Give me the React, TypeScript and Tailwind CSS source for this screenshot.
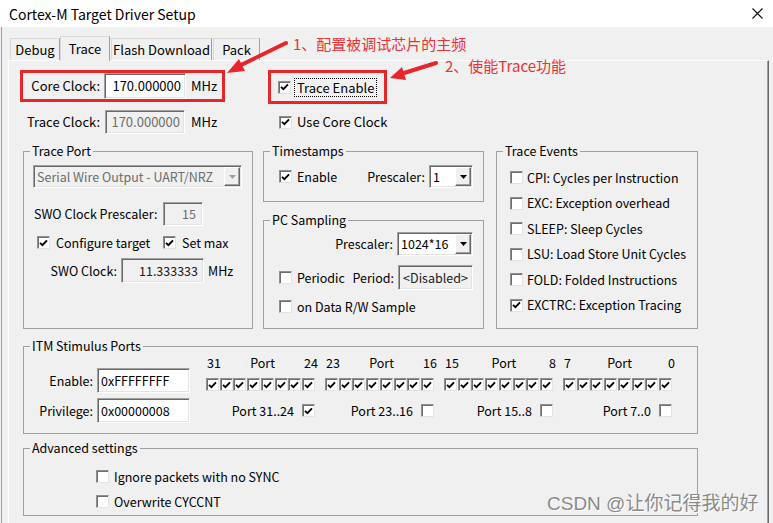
import React from "react";

// classic win32 sunken edge, used for edit boxes and combo boxes
const sunken =
  "border border-t-[#a0a0a0] border-l-[#a0a0a0] border-b-white border-r-white shadow-[inset_1px_1px_0_#696969,inset_-1px_-1px_0_#e3e3e3]";

function Check({ on = false }: { on?: boolean }) {
  return (
    <span className="flex h-[13px] w-[13px] shrink-0 items-center justify-center border border-[#8f8f8f] border-b-[#e3e3e3] border-r-[#e3e3e3] bg-white shadow-[inset_1px_1px_0_#6e6e6e]">
      {on && (
        <svg width="9" height="8" viewBox="0 0 9 8">
          <path d="M1 3.8 L3.4 6.2 L8 1.4" stroke="#000" strokeWidth="1.9" fill="none" />
        </svg>
      )}
    </span>
  );
}

type FieldProps = {
  children: React.ReactNode;
  className?: string;
  disabled?: boolean;
};

function Field({ children, className = "", disabled }: FieldProps) {
  return (
    <div
      className={`flex shrink-0 items-center whitespace-nowrap ${sunken} ${
        disabled ? "bg-[#f0f0f0]" : "bg-white"
      } ${className}`}
    >
      {children}
    </div>
  );
}

function Combo({ value, className = "", disabled }: { value: string; className?: string; disabled?: boolean }) {
  return (
    <div
      className={`flex shrink-0 items-stretch ${sunken} ${
        disabled ? "bg-[#f0f0f0] text-[#6d6d6d]" : "bg-white"
      } ${className}`}
    >
      <span className="flex flex-1 items-center overflow-hidden whitespace-nowrap pl-[3px]">{value}</span>
      <span className="m-[1px] flex w-[16px] items-center justify-center border border-t-white border-l-white border-b-[#696969] border-r-[#696969] bg-[#f0f0f0] shadow-[inset_-1px_-1px_0_#a0a0a0]">
        <svg width="7" height="4" viewBox="0 0 7 4">
          <path d="M0 0h7L3.5 4z" fill={disabled ? "#a0a0a0" : "#000"} />
        </svg>
      </span>
    </div>
  );
}

function Group({ title, className = "", children }: { title: string; className?: string; children?: React.ReactNode }) {
  return (
    <fieldset className={`shrink-0 border border-[#a0a0a0] ${className}`}>
      <legend className="ml-[6px] px-[2px] leading-[16px]">{title}</legend>
      {children}
    </fieldset>
  );
}

function Tab({ label, active, className = "" }: { label: string; active?: boolean; className?: string }) {
  return (
    <div
      className={`flex items-center justify-center whitespace-nowrap border border-b-0 border-[#d9d9d9] border-r-[#a0a0a0] bg-[#f0f0f0] ${
        active ? "relative z-10 -mb-[1px] h-[25px]" : "h-[22px]"
      } ${className}`}
    >
      {label}
    </div>
  );
}

const events = [
  { label: "CPI: Cycles per Instruction", on: false },
  { label: "EXC: Exception overhead", on: false },
  { label: "SLEEP: Sleep Cycles", on: false },
  { label: "LSU: Load Store Unit Cycles", on: false },
  { label: "FOLD: Folded Instructions", on: false },
  { label: "EXCTRC: Exception Tracing", on: true },
];

const portGroups = [
  { hi: "31", lo: "24", name: "Port 31..24", priv: true },
  { hi: "23", lo: "16", name: "Port 23..16", priv: false },
  { hi: "15", lo: "8", name: "Port 15..8", priv: false },
  { hi: "7", lo: "0", name: "Port 7..0", priv: false },
];

export default function App() {
  return (
    <div className="relative h-[523px] w-[773px] overflow-hidden bg-[#f0f0f0] font-['Noto_Sans_CJK_SC','Noto_Sans',sans-serif] text-[12.5px] leading-[16px] text-black">
      {/* title bar */}
      <div className="flex h-[27px] items-center justify-between bg-white pl-[9px] pr-[10px] text-[14px]">
        <span>Cortex-M Target Driver Setup</span>
        <svg width="11" height="11" viewBox="0 0 11 11">
          <path d="M0.5 0.5 L10.5 10.5 M10.5 0.5 L0.5 10.5" stroke="#111" strokeWidth="1.1" />
        </svg>
      </div>

      <div className="ml-[1px] flex h-[496px] flex-col border-l border-[#a0a0a0]">
        {/* tabs */}
        <div className="ml-[8px] mt-[9px] flex h-[24px] items-end text-[13px]">
          <Tab label="Debug" className="w-[50px]" />
          <Tab label="Trace" active className="w-[50px]" />
          <Tab label="Flash Download" className="ml-[1px] w-[101px]" />
          <Tab label="Pack" className="ml-[1px] w-[47px]" />
        </div>

        {/* tab page */}
        <div className="ml-[6px] w-[761px] flex-1 border-l border-t border-r border-l-white border-t-white border-r-[#696969] shadow-[inset_-1px_0_0_#a0a0a0]">
          {/* core clock / trace enable */}
          <div className="ml-[11px] mt-[9px] flex items-start text-[13px]">
            <div className="flex h-[32px] w-[205px] items-center border-[3px] border-[#e5262b]">
              <span className="w-[77px] text-right">Core Clock:</span>
              <Field className="ml-[4px] h-[26px] w-[82px] justify-end pr-[4px]">170.000000</Field>
              <span className="ml-[5px]">MHz</span>
            </div>
            <div className="ml-[43px] flex h-[34px] w-[119px] items-center border-[3px] border-[#e5262b]">
              <span className="ml-[7px]">
                <Check on />
              </span>
              <span className="ml-[3px] border border-dotted border-black px-[2px] leading-[17px]">Trace Enable</span>
            </div>
          </div>

          {/* trace clock */}
          <div className="ml-[11px] mt-[6px] flex h-[24px] items-center text-[13px]">
            <div className="flex w-[248px] items-center">
              <span className="w-[80px] text-right">Trace Clock:</span>
              <Field disabled className="ml-[5px] h-[24px] w-[80px] justify-end pr-[4px] text-[#6d6d6d]">
                170.000000
              </Field>
              <span className="ml-[6px]">MHz</span>
            </div>
            <span className="ml-[11px]">
              <Check on />
            </span>
            <span className="ml-[5px] whitespace-nowrap">Use Core Clock</span>
          </div>

          {/* groups */}
          <div className="ml-[14px] mt-[9px] flex items-start">
            <Group title="Trace Port" className="h-[186px] w-[230px]">
              <Combo disabled value="Serial Wire Output - UART/NRZ" className="ml-[9px] mt-[6px] h-[23px] w-[209px]" />
              <div className="mt-[14px] flex h-[24px] items-center">
                <span className="ml-[10px] w-[129px] whitespace-nowrap">SWO Clock Prescaler:</span>
                <Field disabled className="h-[24px] w-[40px] justify-end pr-[6px] text-[#6d6d6d]">
                  15
                </Field>
              </div>
              <div className="mt-[10px] flex h-[13px] items-center">
                <div className="flex w-[139px] items-center">
                  <span className="ml-[13px]">
                    <Check on />
                  </span>
                  <span className="ml-[6px] whitespace-nowrap">Configure target</span>
                </div>
                <Check on />
                <span className="ml-[6px]">Set max</span>
              </div>
              <div className="mt-[9px] flex h-[25px] items-center">
                <span className="w-[93px] text-right">SWO Clock:</span>
                <Field disabled className="ml-[4px] h-[25px] w-[83px] justify-end pr-[5px] text-[#222]">
                  11.333333
                </Field>
                <span className="ml-[4px]">MHz</span>
              </div>
            </Group>

            <div className="ml-[10px] flex w-[221px] shrink-0 flex-col">
              <Group title="Timestamps" className="h-[59px]">
                <div className="mt-[6px] flex h-[23px] items-center">
                  <span className="ml-[15px]">
                    <Check on />
                  </span>
                  <span className="ml-[5px]">Enable</span>
                  <span className="ml-auto">Prescaler:</span>
                  <Combo value="1" className="ml-[4px] mr-[10px] h-[23px] w-[44px]" />
                </div>
              </Group>
              <Group title="PC Sampling" className="mt-[10px] h-[117px]">
                <div className="mt-[4px] flex h-[24px] items-center justify-end">
                  <span>Prescaler:</span>
                  <Combo value="1024*16" className="ml-[4px] mr-[10px] h-[24px] w-[76px]" />
                </div>
                <div className="mt-[9px] flex h-[25px] items-center">
                  <span className="ml-[15px]">
                    <Check />
                  </span>
                  <span className="ml-[5px]">Periodic</span>
                  <span className="ml-auto">Period:</span>
                  <Field disabled className="ml-[4px] mr-[10px] h-[25px] w-[75px] justify-center text-[#222]">
                    &lt;Disabled&gt;
                  </Field>
                </div>
                <div className="mt-[10px] flex h-[13px] items-center">
                  <span className="ml-[15px]">
                    <Check />
                  </span>
                  <span className="ml-[5px] whitespace-nowrap">on Data R/W Sample</span>
                </div>
              </Group>
            </div>

            <Group title="Trace Events" className="ml-[12px] h-[186px] w-[202px]">
              <div className="ml-[13px] mt-[12px] flex flex-col gap-[12.6px]">
                {events.map((e) => (
                  <div key={e.label} className="flex h-[13px] items-center">
                    <Check on={e.on} />
                    <span className="ml-[4px] whitespace-nowrap">{e.label}</span>
                  </div>
                ))}
              </div>
            </Group>
          </div>

          {/* ITM */}
          <Group title="ITM Stimulus Ports" className="ml-[14px] mt-[9px] h-[96px] w-[675px]">
            <div className="flex">
              <div className="mt-[14px] flex flex-col gap-[5px]">
                <div className="flex items-center">
                  <span className="w-[69px] text-right">Enable:</span>
                  <Field className="ml-[4px] h-[25px] w-[93px] pl-[3px]">0xFFFFFFFF</Field>
                </div>
                <div className="flex items-center">
                  <span className="w-[69px] text-right">Privilege:</span>
                  <Field className="ml-[4px] h-[25px] w-[93px] pl-[3px]">0x00000008</Field>
                </div>
              </div>
              <div className="ml-[16px] w-[466px]">
                <div className="mt-[1px] grid h-[16px] grid-cols-4 gap-x-[10px]">
                  {portGroups.map((g) => (
                    <div key={g.hi} className="flex justify-between pl-[1px]">
                      <span>{g.hi}</span>
                      <span>Port</span>
                      <span className="-mr-[3px]">{g.lo}</span>
                    </div>
                  ))}
                </div>
                <div className="mt-[7px] grid grid-cols-4 gap-x-[10px]">
                  {portGroups.map((g) => (
                    <div key={g.hi} className="flex justify-between">
                      {Array.from({ length: 8 }).map((_, i) => (
                        <Check key={i} on />
                      ))}
                    </div>
                  ))}
                </div>
                <div className="mt-[13px] grid grid-cols-4 gap-x-[10px]">
                  {portGroups.map((g) => (
                    <div key={g.hi} className="flex h-[13px] items-center justify-end">
                      <span className="whitespace-nowrap">{g.name}</span>
                      <span className="ml-[8px]">
                        <Check on={g.priv} />
                      </span>
                    </div>
                  ))}
                </div>
              </div>
            </div>
          </Group>

          {/* advanced */}
          <Group title="Advanced settings" className="ml-[14px] mt-[6px] h-[76px] w-[675px]">
            <div className="ml-[72px] mt-[14px] flex h-[13px] items-center">
              <Check />
              <span className="ml-[5px]">Ignore packets with no SYNC</span>
            </div>
            <div className="ml-[72px] mt-[12px] flex h-[13px] items-center">
              <Check />
              <span className="ml-[5px]">Overwrite CYCCNT</span>
            </div>
          </Group>
        </div>
      </div>

      {/* red annotations on top of the screenshot */}
      <span className="absolute left-[293px] top-[35px] whitespace-nowrap text-[15px] leading-[18px] text-[#ec3237]">
        1、配置被调试芯片的主频
      </span>
      <span className="absolute left-[445px] top-[57px] whitespace-nowrap text-[15px] leading-[18px] text-[#ec3237]">
        2、使能Trace功能
      </span>
      <svg className="pointer-events-none absolute left-0 top-0" width="773" height="523">
        <line x1="286" y1="43" x2="241" y2="65" stroke="#e5262b" strokeWidth="4" strokeLinecap="round" />
        <polygon points="227,73 239,59 245,71" fill="#e5262b" />
        <line x1="436" y1="63" x2="404" y2="73" stroke="#e5262b" strokeWidth="4" strokeLinecap="round" />
        <polygon points="390,78 402,67 406,80" fill="#e5262b" />
      </svg>

      {/* watermark */}
      <span className="absolute left-[547px] top-[492px] whitespace-nowrap font-['Liberation_Sans','Noto_Sans_CJK_SC',sans-serif] text-[19px] leading-[24px] text-[#8a8a8a] [text-shadow:1px_1px_0_#ffffff]">
        CSDN @让你记得我的好
      </span>
    </div>
  );
}
